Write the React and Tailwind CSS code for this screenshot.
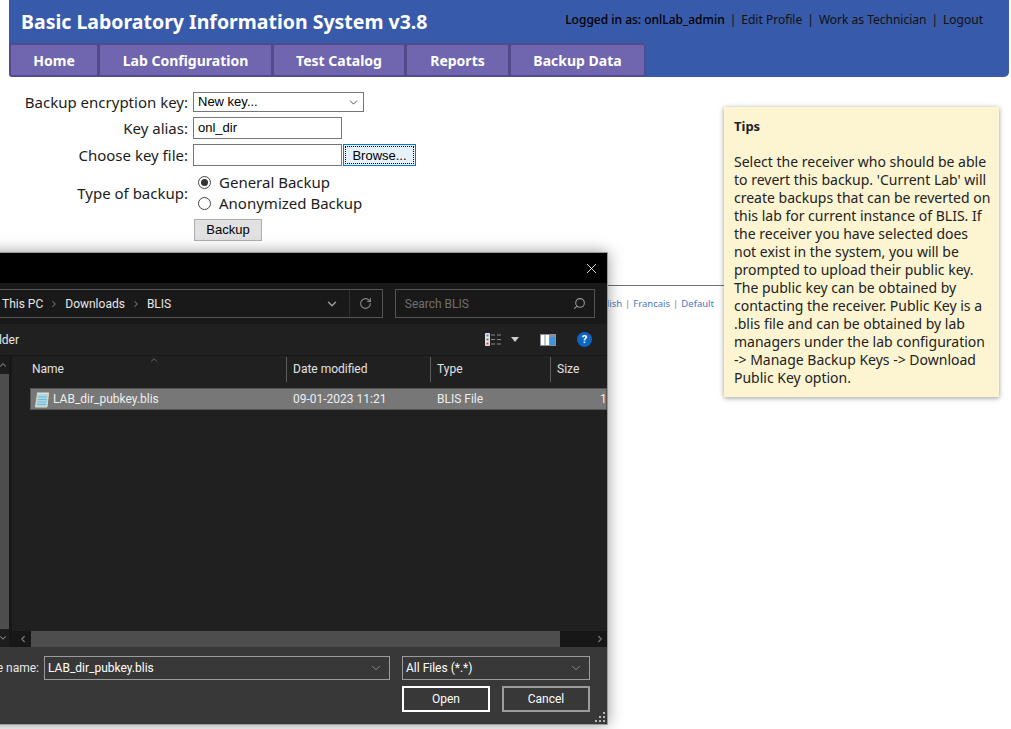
import { ChevronDown, ChevronLeft, ChevronRight, ChevronUp, RotateCw, Search, X } from 'lucide-react'

const formFont = "font-['Noto_Sans','DejaVu_Sans',sans-serif]"
const winFont = "font-['Roboto','Open_Sans',sans-serif]"

const NAV_ITEMS = [
  { label: 'Home', width: 'w-[90px]' },
  { label: 'Lab Configuration', width: 'w-[175px]' },
  { label: 'Test Catalog', width: 'w-[134px]' },
  { label: 'Reports', width: 'w-[105px]' },
  { label: 'Backup Data', width: 'w-[137px]' },
]

// ── Page header ───────────────────────────────────────────────────────────────
function Header() {
  return (
    <div className="ml-[9px] mr-[2px] h-[77px] bg-[#375aaa] rounded-b-[5px]">
      <div className="h-[43px] flex items-start justify-between pl-[12px] pr-[26px]">
        <div className="text-white text-[19.5px] font-bold leading-[43px] whitespace-nowrap">
          Basic Laboratory Information System v3.8
        </div>
        <div className="text-[#111] text-[12px] leading-[40px] whitespace-nowrap">
          <span className="font-medium text-black">Logged in as: onlLab_admin</span>
          <span className="mx-[5px]">|</span>
          <span>Edit Profile</span>
          <span className="mx-[5px]">|</span>
          <span>Work as Technician</span>
          <span className="mx-[5px]">|</span>
          <span>Logout</span>
        </div>
      </div>
      <div className="flex">
        {NAV_ITEMS.map((item) => (
          <div
            key={item.label}
            className={`${item.width} h-[34px] -mr-[1px] flex items-center justify-center bg-[#7066b0] border-2 border-[#514a8b] rounded-[3px] text-white text-[14px] font-bold whitespace-nowrap`}
          >
            {item.label}
          </div>
        ))}
      </div>
    </div>
  )
}

// ── Backup form ───────────────────────────────────────────────────────────────
function FormRow({ label, children, className = '' }) {
  return (
    <div className={`flex items-center ${className}`}>
      <div className="w-[188px] text-right text-[15px] text-[#1c1c1c] whitespace-nowrap">{label}</div>
      <div className="ml-[5px] flex items-center">{children}</div>
    </div>
  )
}

function BackupForm() {
  return (
    <div className="pt-[15px]">
      <FormRow label="Backup encryption key:" className="h-[20px]">
        <div className="w-[171px] h-[20px] border border-[#767676] bg-white flex items-center justify-between pl-[4px] pr-[3px] text-[13px] text-black font-['Liberation_Sans',sans-serif]">
          <span>New key...</span>
          <ChevronDown size={13} strokeWidth={1.5} className="text-[#333]" />
        </div>
      </FormRow>
      <FormRow label="Key alias:" className="h-[22px] mt-[5px]">
        <div className="w-[149px] h-[22px] border border-[#767676] bg-white pl-[4px] text-[13px] leading-[20px] text-black font-['Liberation_Sans',sans-serif]">
          onl_dir
        </div>
      </FormRow>
      <FormRow label="Choose key file:" className="h-[22px] mt-[5px]">
        <div className="w-[149px] h-[22px] border border-[#767676] bg-white" />
        <div className="ml-[1px] w-[73px] h-[22px] border border-[#0078d7] bg-[#e5f1fb] p-[1px] text-[13px] text-black font-['Liberation_Sans',sans-serif]">
          <div className="h-full border border-dotted border-black flex items-center justify-center leading-none">Browse...</div>
        </div>
      </FormRow>
      <div className="flex mt-[6px]">
        <div className="w-[188px] h-[42px] flex items-center justify-end text-[15px] text-[#1c1c1c] whitespace-nowrap">Type of backup:</div>
        <div className="ml-[5px] flex flex-col">
          <div className="h-[21px] flex items-center">
            <div className="ml-[5px] w-[13px] h-[13px] rounded-full border border-[#444] flex items-center justify-center">
              <div className="w-[7px] h-[7px] rounded-full bg-[#333]" />
            </div>
            <span className="ml-[8px] text-[15px] text-[#1c1c1c]">General Backup</span>
          </div>
          <div className="h-[21px] flex items-center">
            <div className="ml-[5px] w-[13px] h-[13px] rounded-full border border-[#444]" />
            <span className="ml-[8px] text-[15px] text-[#1c1c1c]">Anonymized Backup</span>
          </div>
        </div>
      </div>
      <div className="ml-[194px] mt-[5px] w-[68px] h-[22px] border border-[#adadad] bg-[#e1e1e1] flex items-center justify-center text-[13px] text-black font-['Liberation_Sans',sans-serif]">
        Backup
      </div>
    </div>
  )
}

function Footer() {
  return (
    <div className="mt-[44px]">
      <div className="w-[724px] h-[1px] bg-[#707070]" />
      <div className="mt-[12px] w-[714px] text-right text-[9.5px] leading-[12px] text-[#8a8a8a]">
        <span className="text-[#4a78c8]">English</span>
        <span className="mx-[3px]">|</span>
        <span className="text-[#4a78c8]">Francais</span>
        <span className="mx-[3px]">|</span>
        <span className="text-[#4a78c8]">Default</span>
      </div>
    </div>
  )
}

// ── Tips box ──────────────────────────────────────────────────────────────────
function TipsBox() {
  return (
    <div className="absolute left-[724px] top-[107px] w-[275px] h-[290px] bg-[#fdf5d2] shadow-[0_1px_5px_rgba(0,0,0,0.4)] pl-[10px] pr-[8px] pt-[10px] text-[14px] leading-[18px] text-[#222]">
      <div className="font-bold text-[13px]">Tips</div>
      <div className="mt-[18px]">
        Select the receiver who should be able to revert this backup. 'Current Lab' will create backups that can be reverted on this lab for current instance of BLIS. If the receiver you have selected does not exist in the system, you will be prompted to upload their public key. The public key can be obtained by contacting the receiver. Public Key is a .blis file and can be obtained by lab managers under the lab configuration -&gt; Manage Backup Keys -&gt; Download Public Key option.
      </div>
    </div>
  )
}

// ── File dialog icons ─────────────────────────────────────────────────────────
function NotepadIcon() {
  return (
    <svg width="16" height="17" viewBox="0 0 16 17" className="shrink-0">
      <path d="M3.500 2.500h11l-1.500 13.500H1.500z" fill="#a9d8e8" stroke="#e6d9b8" />
      <path d="M4 6h9M3.700 8.500h9M3.400 11h9M3.100 13.500h9" stroke="#7fb6cf" strokeWidth="1" />
      <path d="M4 1v2M6 1v2M8 1v2M10 1v2M12 1v2M14 1v2" stroke="#dfe6ea" strokeWidth="1" />
    </svg>
  )
}

function ViewIcon() {
  return (
    <svg width="17" height="13" viewBox="0 0 17 13">
      <path d="M0.500 0.500h4v12h-4z" fill="#e8e8e8" stroke="#ddd" />
      <path d="M1.500 1.500h2v2h-2z" fill="#5a7fb0" />
      <path d="M1.500 5.500h2v2h-2z" fill="#6a6a6a" />
      <path d="M1.500 9.500h2v2h-2z" fill="#b04a3a" />
      <path d="M6 2h4M12 2h4M6 6.500h4M12 6.500h4M6 11h4M12 11h4" stroke="#8a8a8a" />
    </svg>
  )
}

function PaneIcon() {
  return (
    <svg width="16" height="12" viewBox="0 0 16 12">
      <rect width="16" height="12" fill="#8b9097" />
      <rect x="1" y="1" width="3.500" height="10" fill="#fff" />
      <rect x="5.500" y="1" width="3.500" height="10" fill="#fff" />
      <rect x="10" y="3" width="5" height="8" fill="#3d94dc" />
    </svg>
  )
}

function ColumnHead({ label, width }) {
  return (
    <div className={`${width} h-[25px] shrink-0 border-r border-[#5c5c5c] pl-[6px] text-[12px] leading-[25px] text-[#e2e2e2]`}>
      {label}
    </div>
  )
}

function DarkSelect({ text, className }) {
  return (
    <div className={`h-[24px] border border-[#9b9b9b] bg-[#383838] flex items-center justify-between pl-[3px] pr-[6px] text-[12px] text-white ${className}`}>
      <span>{text}</span>
      <ChevronDown size={14} strokeWidth={1} className="text-[#bdbdbd]" />
    </div>
  )
}

// ── Dark file dialog ──────────────────────────────────────────────────────────
function FileDialog() {
  return (
    <div className={`absolute -left-[100px] top-[252px] w-[708px] h-[473px] border border-[#9a9a9a] bg-[#191919] shadow-[0_0_14px_rgba(0,0,0,0.4)] flex flex-col ${winFont}`}>
      <div className="h-[30px] bg-black flex items-center justify-end pr-[7px] shrink-0">
        <X size={17} strokeWidth={1.2} className="text-white" />
      </div>

      <div className="h-[41px] shrink-0 flex items-center pr-[12px]">
        <div className="w-[550px] ml-[-60px] h-[29px] border border-[#555] flex items-center text-[12px] text-[#e6e6e6]">
          <div className="flex-1 flex items-center min-w-0">
            <div className="flex items-center ml-[160px] whitespace-nowrap">
              <span>This PC</span>
              <ChevronRight size={10} strokeWidth={2.5} className="mx-[6px] text-[#777]" />
              <span>Downloads</span>
              <ChevronRight size={10} strokeWidth={2.5} className="mx-[6px] text-[#777]" />
              <span>BLIS</span>
            </div>
          </div>
          <div className="w-[33px] h-full flex items-center justify-center">
            <ChevronDown size={14} strokeWidth={2.5} className="text-[#999]" />
          </div>
          <div className="w-[33px] h-full border-l border-[#2e2e2e] flex items-center justify-center">
            <RotateCw size={13} strokeWidth={2} className="text-[#888]" />
          </div>
        </div>
        <div className="ml-[12px] w-[203px] h-[29px] border border-[#555] flex items-center justify-between pl-[9px] pr-[8px] text-[12px] text-[#6f6f6f]">
          <span>Search BLIS</span>
          <Search size={13} strokeWidth={2} className="text-[#999] -scale-x-100" />
        </div>
      </div>

      <div className="h-[31px] shrink-0 bg-[#202020] flex items-center pl-[60px] pr-[15px] text-[12px] text-[#e6e6e6]">
        <span>New folder</span>
        <div className="ml-auto flex items-center">
          <ViewIcon />
          <div className="ml-[9px] w-0 h-0 border-x-[4px] border-x-transparent border-t-[5px] border-t-[#ccc]" />
          <div className="ml-[21px]"><PaneIcon /></div>
          <div className="ml-[21px] w-[15px] h-[15px] rounded-full bg-[#0a66c2] text-white text-[11px] font-bold leading-[15px] text-center">?</div>
        </div>
      </div>

      <div className="flex-1 flex min-h-0 border-t border-[#171717]">
        <div className="w-[111px] shrink-0 flex justify-end border-r-[3px] border-[#171717] bg-[#202020]">
          <div className="w-[11px] h-full bg-[#1d1d1d] flex flex-col">
            <ChevronUp size={10} strokeWidth={2.500} className="text-[#777] my-[4px]" />
            <div className="h-[256px] bg-[#4d4d4d]" />
            <div className="flex-1" />
            <ChevronDown size={10} strokeWidth={2.500} className="text-[#777] my-[4px]" />
          </div>
        </div>
        <div className="flex-1 min-w-0 flex flex-col bg-[#202020]">
          <div className="h-[32px] shrink-0 relative flex pl-[14px] pt-[1px] overflow-hidden">
            <ChevronUp size={10} strokeWidth={1.25} className="absolute left-[137px] top-[-1px] text-[#aaa]" />
            <ColumnHead label="Name" width="w-[261px]" />
            <ColumnHead label="Date modified" width="w-[144px]" />
            <ColumnHead label="Type" width="w-[120px]" />
            <div className="pl-[6px] text-[12px] leading-[25px] text-[#e2e2e2]">Size</div>
          </div>
          <div className="ml-[18px] h-[22px] shrink-0 bg-[#777] border border-[#555] flex items-center pl-[3px] text-[12px] text-[#eee] whitespace-nowrap overflow-hidden">
            <NotepadIcon />
            <span className="ml-[3px] w-[240px] shrink-0">LAB_dir_pubkey.blis</span>
            <span className="w-[144px] shrink-0">09-01-2023 11:21</span>
            <span className="w-[163px] shrink-0">BLIS File</span>
            <span className="shrink-0">1 KB</span>
          </div>
          <div className="flex-1" />
          <div className="h-[16px] shrink-0 flex items-stretch bg-[#171717]">
            <div className="w-[16px] ml-[3px] flex items-center justify-center">
              <ChevronLeft size={10} strokeWidth={3} className="text-[#777]" />
            </div>
            <div className="w-[529px] bg-[#4d4d4d]" />
            <div className="flex-1 flex items-center justify-end pr-[2px]">
              <ChevronRight size={10} strokeWidth={3} className="text-[#777]" />
            </div>
          </div>
        </div>
      </div>

      <div className="relative h-[77px] shrink-0 bg-[#383838] text-[12px] text-white">
        <div className="flex items-center pt-[9px] pl-[36px]">
          <div className="w-[102px] text-right whitespace-nowrap text-[#e8e8e8]">File name:</div>
          <DarkSelect text="LAB_dir_pubkey.blis" className="ml-[5px] w-[346px]" />
          <DarkSelect text="All Files (*.*)" className="ml-[12px] w-[188px]" />
        </div>
        <div className="flex justify-end gap-[12px] mt-[6px] pr-[17px]">
          <div className="w-[88px] h-[26px] border-2 border-white flex items-center justify-center">Open</div>
          <div className="w-[88px] h-[26px] border-2 border-[#9b9b9b] flex items-center justify-center">Cancel</div>
        </div>
        <svg width="12" height="12" viewBox="0 0 12 12" className="absolute right-[1px] bottom-[1px]">
          <path d="M9 1h2v2H9zM5 5h2v2H5zM9 5h2v2H9zM1 9h2v2H1zM5 9h2v2H5zM9 9h2v2H9z" fill="#b5b5b5" />
        </svg>
      </div>
    </div>
  )
}

export default function App() {
  return (
    <div className={`relative w-[1011px] h-[729px] bg-white overflow-hidden ${formFont}`}>
      <Header />
      <BackupForm />
      <Footer />
      <TipsBox />
      <FileDialog />
    </div>
  )
}
